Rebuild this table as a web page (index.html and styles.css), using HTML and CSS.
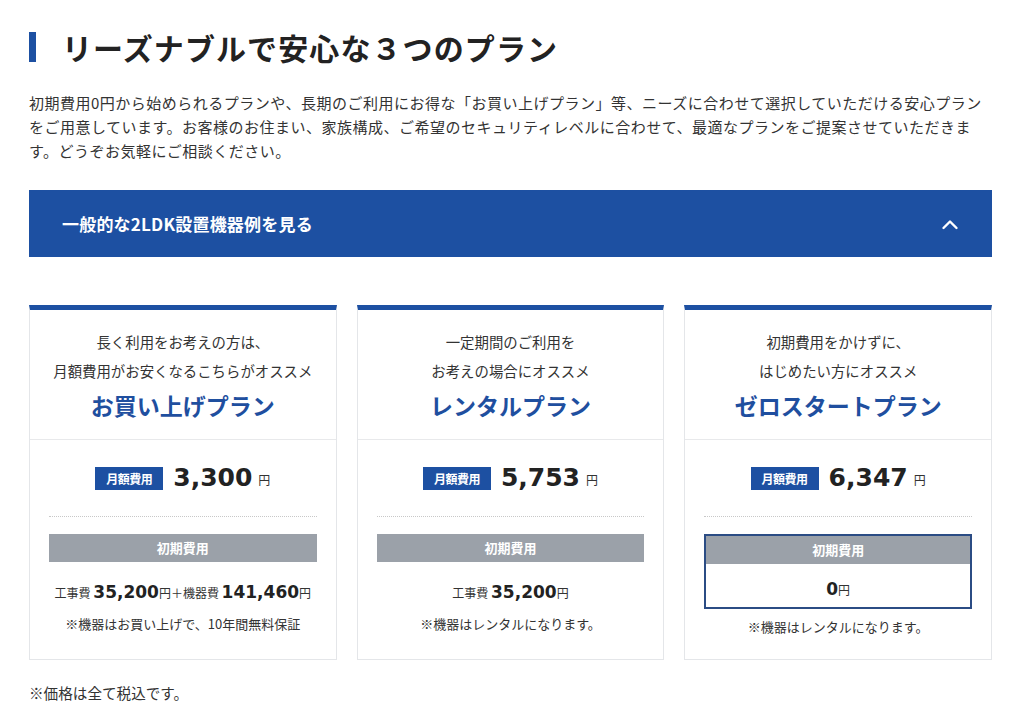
FILE: index.html
```html
<!DOCTYPE html>
<html lang="ja">
<head>
<meta charset="utf-8">
<title>リーズナブルで安心な３つのプラン</title>
<link rel="stylesheet" href="styles.css">
</head>
<body>
<main class="page">
  <h1 class="heading">リーズナブルで安心な３つのプラン</h1>
  <p class="intro">初期費用0円から始められるプランや、長期のご利用にお得な「お買い上げプラン」等、ニーズに合わせて選択していただける安心プランをご用意しています。お客様のお住まい、家族構成、ご希望のセキュリティレベルに合わせて、最適なプランをご提案させていただきます。どうぞお気軽にご相談ください。</p>

  <div class="toggle">
    <span class="toggle-label">一般的な2LDK設置機器例を見る</span>
    <svg class="chevron" width="18" height="11" viewBox="0 0 18 11"><path d="M2.5 9 L9 2.5 L15.5 9" fill="none" stroke="#fff" stroke-width="2.4" stroke-linecap="round" stroke-linejoin="round"/></svg>
  </div>

  <div class="plans">
    <section class="card">
      <div class="card-head">
        <p class="lead">長く利用をお考えの方は、<br>月額費用がお安くなるこちらがオススメ</p>
        <h2 class="plan-name">お買い上げプラン</h2>
      </div>
      <div class="card-body">
        <div class="price-row">
          <span class="badge">月額費用</span>
          <span class="price">3,300</span>
          <span class="yen">円</span>
        </div>
        <div class="dots"></div>
        <div class="init-label">初期費用</div>
        <p class="cost"><span class="small">工事費 </span><span class="num">35,200</span><span class="small">円＋機器費 </span><span class="num">141,460</span><span class="small">円</span></p>
        <p class="note">※機器はお買い上げで、10年間無料保証</p>
      </div>
    </section>

    <section class="card">
      <div class="card-head">
        <p class="lead">一定期間のご利用を<br>お考えの場合にオススメ</p>
        <h2 class="plan-name">レンタルプラン</h2>
      </div>
      <div class="card-body">
        <div class="price-row">
          <span class="badge">月額費用</span>
          <span class="price">5,753</span>
          <span class="yen">円</span>
        </div>
        <div class="dots"></div>
        <div class="init-label">初期費用</div>
        <p class="cost"><span class="small">工事費 </span><span class="num">35,200</span><span class="small">円</span></p>
        <p class="note">※機器はレンタルになります。</p>
      </div>
    </section>

    <section class="card">
      <div class="card-head">
        <p class="lead">初期費用をかけずに、<br>はじめたい方にオススメ</p>
        <h2 class="plan-name">ゼロスタートプラン</h2>
      </div>
      <div class="card-body">
        <div class="price-row">
          <span class="badge">月額費用</span>
          <span class="price">6,347</span>
          <span class="yen">円</span>
        </div>
        <div class="dots"></div>
        <div class="init-box">
          <div class="init-label">初期費用</div>
          <p class="zero"><span class="num">0</span><span class="small">円</span></p>
        </div>
        <p class="note note-zero">※機器はレンタルになります。</p>
      </div>
    </section>
  </div>

  <p class="footnote">※価格は全て税込です。</p>
</main>
</body>
</html>
```

FILE: styles.css
```css
* { box-sizing: border-box; }

body {
  margin: 0;
  background: #fff;
  color: #333;
  font-family: "Noto Sans CJK JP", "Noto Sans", sans-serif;
}

.page {
  width: 963px;
  margin-left: 29px;
  padding-top: 32px;
}

.heading {
  margin: 0;
  height: 30px;
  line-height: 30px;
  font-size: 30px;
  font-weight: 700;
  letter-spacing: 1.1px;
  color: #222;
  border-left: 7px solid #1d50a2;
  padding-left: 26px;
}

.intro {
  margin: 29px 0 0;
  font-size: 15px;
  line-height: 24px;
  letter-spacing: 0.5px;
  color: #333;
}

.toggle {
  margin-top: 27px;
  height: 67px;
  background: #1d50a2;
  color: #fff;
  display: flex;
  align-items: center;
  justify-content: space-between;
  padding: 0 33px 0 33px;
}

.toggle-label {
  font-size: 17px;
  font-weight: 700;
  letter-spacing: 0.2px;
}

.chevron { display: block; margin-top: 1px; }

.plans {
  margin-top: 48px;
  display: grid;
  grid-template-columns: repeat(3, 1fr);
  gap: 20px;
}

.card {
  background: #fff;
  border: 1px solid #e4e6e9;
  border-top: 5px solid #1d50a2;
  display: flex;
  flex-direction: column;
}

.card-head {
  padding: 17px 8px 16px;
  text-align: center;
  border-bottom: 1px solid #e8e9eb;
}

.lead {
  margin: 0;
  font-size: 14.4px;
  line-height: 29px;
  color: #333;
}

.plan-name {
  margin: 2px 0 0;
  font-size: 23px;
  line-height: 36px;
  font-weight: 700;
  color: #1f4f9f;
}

.card-body {
  padding: 20px 19px 22px;
  text-align: center;
}

.price-row {
  height: 36px;
  display: flex;
  align-items: center;
  justify-content: center;
}

.badge {
  width: 68px;
  height: 23px;
  line-height: 23px;
  background: #1d50a2;
  color: #fff;
  font-size: 12px;
  font-weight: 700;
  letter-spacing: -0.5px;
  text-align: center;
}

.price {
  margin-left: 10px;
  font-family: "DejaVu Sans", sans-serif;
  font-size: 25px;
  font-weight: 700;
  color: #222;
  line-height: 36px;
}

.yen {
  margin-left: 6px;
  font-size: 12px;
  color: #333;
  margin-top: 2px;
}

.dots {
  margin-top: 20px;
  border-top: 1px dotted #c8c8c8;
}

.init-label {
  margin-top: 17px;
  height: 28px;
  line-height: 28px;
  background: #9ba1a9;
  color: #fff;
  font-size: 13px;
  font-weight: 700;
}

.cost {
  margin: 17px 0 0;
  line-height: 24px;
  white-space: nowrap;
  color: #222;
}

.small {
  font-size: 12px;
  color: #333;
}

.num {
  font-family: "DejaVu Sans", sans-serif;
  font-size: 17px;
  font-weight: 700;
  color: #222;
}

.note {
  margin: 9px 0 0;
  font-size: 13px;
  line-height: 20px;
  color: #333;
}

.init-box {
  margin-top: 17px;
  border: 2px solid #2b4c84;
}

.init-box .init-label { margin-top: 0; }

.zero {
  margin: 0;
  padding: 12px 0 5px;
  line-height: 24px;
}

.note-zero { margin-top: 8px; }

.footnote {
  margin: 21px 0 0;
  font-size: 14.6px;
  line-height: 24px;
  color: #333;
}
```
